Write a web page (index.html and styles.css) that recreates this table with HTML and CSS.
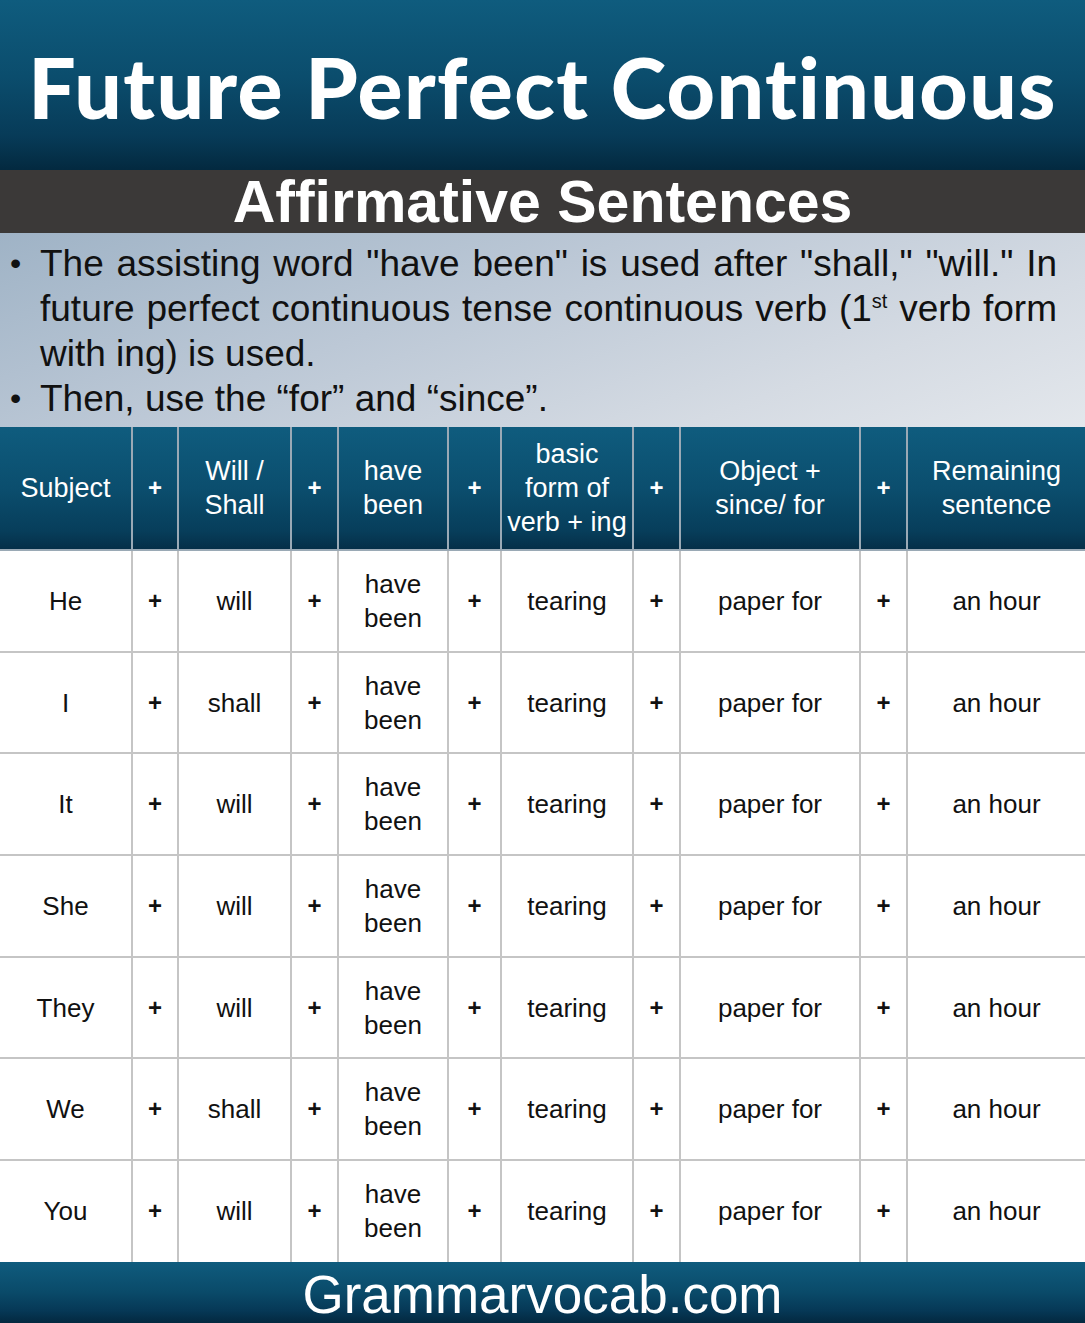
FILE: index.html
```html
<!DOCTYPE html>
<html lang="en">
<head>
<meta charset="utf-8">
<title>Future Perfect Continuous</title>
<link rel="stylesheet" href="styles.css">
</head>
<body>
<div class="page">
  <header class="title-bar"><h1 class="title">Future Perfect Continuous</h1></header>
  <div class="sub-bar"><h2 class="subtitle">Affirmative Sentences</h2></div>
  <section class="notes">
    <ul class="bullets">
      <li class="just">The assisting word "have been" is used after "shall," "will." In future perfect continuous tense continuous verb (1<sup>st</sup> verb form with ing) is used.</li>
      <li>Then, use the “for” and “since”.</li>
    </ul>
  </section>
  <table class="grid">
    <colgroup>
      <col class="c1"><col class="cp1"><col class="c2"><col class="cp2"><col class="c3"><col class="cp3"><col class="c4"><col class="cp4"><col class="c5"><col class="cp5"><col class="c6">
    </colgroup>
    <thead>
      <tr>
        <th>Subject</th><th class="plus">+</th><th>Will /<br>Shall</th><th class="plus">+</th><th>have<br>been</th><th class="plus">+</th><th>basic<br>form of<br>verb + ing</th><th class="plus">+</th><th>Object +<br>since/ for</th><th class="plus">+</th><th>Remaining<br>sentence</th>
      </tr>
    </thead>
    <tbody>
      <tr><td>He</td><td class="plus">+</td><td>will</td><td class="plus">+</td><td>have<br>been</td><td class="plus">+</td><td>tearing</td><td class="plus">+</td><td>paper for</td><td class="plus">+</td><td>an hour</td></tr>
      <tr><td>I</td><td class="plus">+</td><td>shall</td><td class="plus">+</td><td>have<br>been</td><td class="plus">+</td><td>tearing</td><td class="plus">+</td><td>paper for</td><td class="plus">+</td><td>an hour</td></tr>
      <tr><td>It</td><td class="plus">+</td><td>will</td><td class="plus">+</td><td>have<br>been</td><td class="plus">+</td><td>tearing</td><td class="plus">+</td><td>paper for</td><td class="plus">+</td><td>an hour</td></tr>
      <tr><td>She</td><td class="plus">+</td><td>will</td><td class="plus">+</td><td>have<br>been</td><td class="plus">+</td><td>tearing</td><td class="plus">+</td><td>paper for</td><td class="plus">+</td><td>an hour</td></tr>
      <tr><td>They</td><td class="plus">+</td><td>will</td><td class="plus">+</td><td>have<br>been</td><td class="plus">+</td><td>tearing</td><td class="plus">+</td><td>paper for</td><td class="plus">+</td><td>an hour</td></tr>
      <tr><td>We</td><td class="plus">+</td><td>shall</td><td class="plus">+</td><td>have<br>been</td><td class="plus">+</td><td>tearing</td><td class="plus">+</td><td>paper for</td><td class="plus">+</td><td>an hour</td></tr>
      <tr><td>You</td><td class="plus">+</td><td>will</td><td class="plus">+</td><td>have<br>been</td><td class="plus">+</td><td>tearing</td><td class="plus">+</td><td>paper for</td><td class="plus">+</td><td>an hour</td></tr>
    </tbody>
  </table>
  <footer class="footer">Grammarvocab.com</footer>
</div>
</body>
</html>
```
FILE: styles.css
```css
* { box-sizing: border-box; }
html, body { margin: 0; padding: 0; }
body {
  width: 1085px;
  font-family: "Liberation Sans", Arial, sans-serif;
  background: #ffffff;
}
.page { width: 1085px; height: 1323px; overflow: hidden; }

.title-bar {
  height: 170px;
  background: linear-gradient(to bottom, #0f5c7e 0%, #0b4d6d 45%, #073b58 80%, #03293f 100%);
  display: flex;
  align-items: center;
  justify-content: center;
}
.title {
  margin: 0;
  padding-top: 4px;
  color: #ffffff;
  font-family: "Lato", "Open Sans", sans-serif;
  font-weight: 900;
  font-size: 84px;
  letter-spacing: 1.4px;
  line-height: 1;
  white-space: nowrap;
}

.sub-bar {
  height: 63px;
  background: #3b3938;
  display: flex;
  align-items: center;
  justify-content: center;
}
.subtitle {
  margin: 0;
  color: #ffffff;
  font-family: "Liberation Sans", Arial, sans-serif;
  font-weight: 700;
  font-size: 59px;
  line-height: 1;
  padding-top: 2px;
  white-space: nowrap;
}

.notes {
  height: 194px;
  background: linear-gradient(160deg, #9fb3c6 0%, #bcc8d6 40%, #d5dbe3 75%, #e3e7ec 100%);
  padding: 8px 28px 0 10px;
}
.bullets {
  margin: 0;
  padding: 0;
  list-style: none;
}
.bullets li {
  position: relative;
  padding-left: 30px;
  font-size: 37px;
  line-height: 45px;
  color: #111111;
}
.bullets li::before {
  content: "•";
  position: absolute;
  left: 0;
  top: 0;
  font-size: 32px;
}
.bullets li.just { text-align: justify; }
.bullets sup {
  font-size: 20px;
  line-height: 1;
  vertical-align: 13px;
}

.grid {
  width: 1085px;
  border-collapse: collapse;
  table-layout: fixed;
}
.c1 { width: 132px; }
.cp1 { width: 46px; }
.c2 { width: 113px; }
.cp2 { width: 47px; }
.c3 { width: 110px; }
.cp3 { width: 53px; }
.c4 { width: 132px; }
.cp4 { width: 47px; }
.c5 { width: 180px; }
.cp5 { width: 47px; }
.c6 { width: 178px; }

.grid th, .grid td {
  border: 2px solid #c5c5c5;
  text-align: center;
  vertical-align: middle;
  font-size: 26px;
  line-height: 34px;
  padding: 0;
}
.grid tr > :first-child { border-left: none; }
.grid tr > :last-child { border-right: none; }
.grid thead th {
  height: 123px;
  font-weight: 400;
  font-size: 27px;
  color: #ffffff;
  background: linear-gradient(to bottom, #0f5c7e 0%, #0b4e6e 50%, #073e5b 85%, #052f48 100%);
  border-top: none;
  border-color: #9aa9b5;
}
.grid tbody td {
  height: 101.7px;
  color: #111111;
  background: #ffffff;
}
.grid tbody tr:last-child td { border-bottom: none; }
.grid .plus { font-weight: 700; font-size: 24px; }

.footer {
  height: 61px;
  background: linear-gradient(to bottom, #0f5c7e 0%, #0a4a69 50%, #063856 80%, #03283f 100%);
  color: #ffffff;
  font-size: 53px;
  line-height: 61px;
  text-align: center;
  padding-top: 2px;
}
```
